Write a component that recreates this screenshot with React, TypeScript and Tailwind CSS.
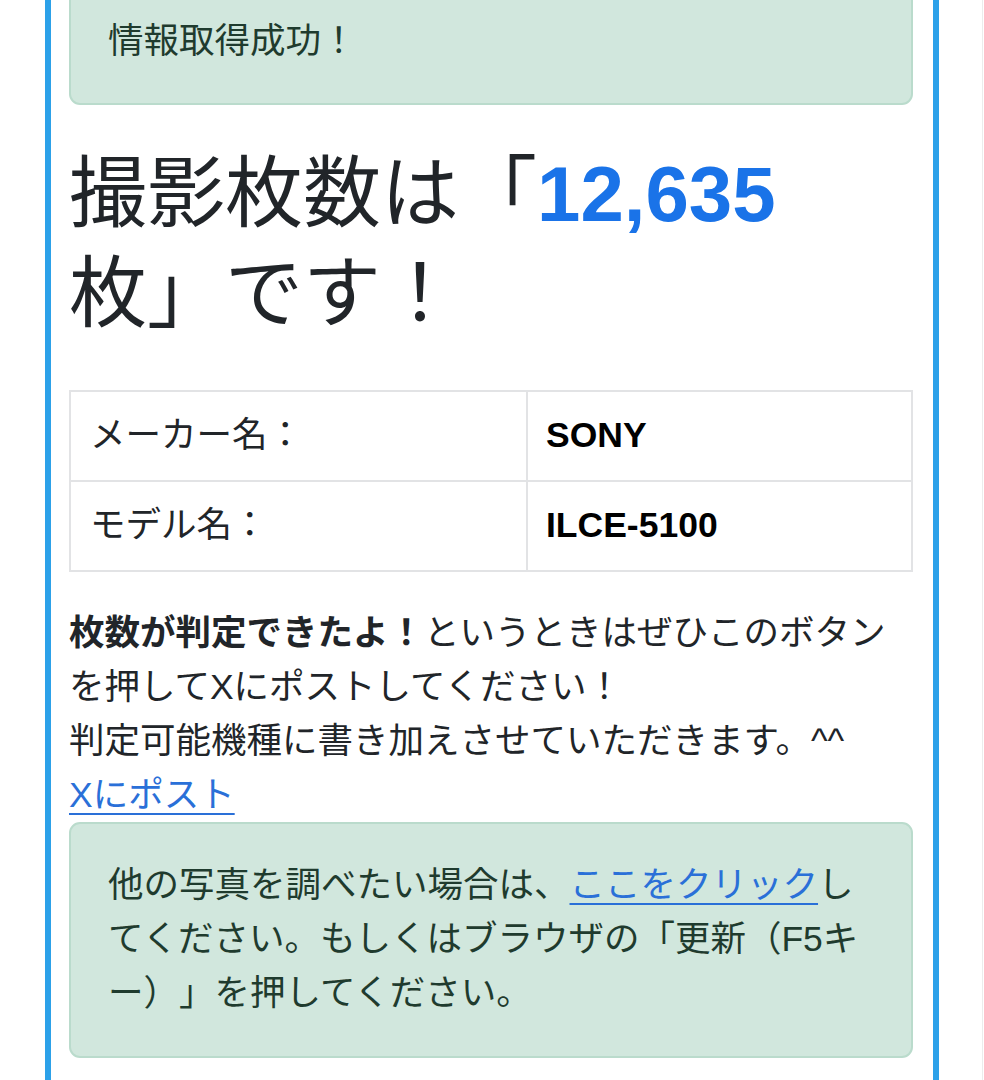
const FONT = "font-['Liberation_Sans','Noto_Sans_CJK_JP',sans-serif]";

const rows = [
    { label: 'メーカー名：', value: 'SONY' },
    { label: 'モデル名：', value: 'ILCE-5100' },
];

export default function App() {
    return (
        <div className={`${FONT} min-h-screen w-[983px] overflow-hidden border-r border-[#ececec] bg-white text-[#212529] [text-spacing-trim:space-all]`}>
            <div className="ml-[45px] min-h-[1140px] w-[894px] border-x-[6px] border-[#2ca1e9] pl-[18px] pr-[20px]">
                {/* success alert */}
                <div className="-mt-[23px] rounded-[11px] border-2 border-[#badbcc] bg-[#d1e7dd] px-[37px] py-[35px] text-[35.5px] leading-[54px] text-[#1f3b2e]">
                    情報取得成功！
                </div>

                <h1 className="mt-[39px] mb-[46px] text-[78px] font-normal leading-[100px]">
                    撮影枚数は「<span className="font-bold text-[#1a73e8]">12,635</span>
                    <br />
                    枚」です！
                </h1>

                <table className="mb-[34px] w-full border-collapse text-[35.5px]">
                    <tbody>
                        {rows.map((r) => (
                            <tr key={r.label} className="h-[90px]">
                                <td className="w-[457px] border-2 border-[#e2e3e5] px-[19px] align-middle">{r.label}</td>
                                <td className="border-2 border-[#e2e3e5] px-[18px] align-middle font-bold text-black">{r.value}</td>
                            </tr>
                        ))}
                    </tbody>
                </table>

                <p className="text-[35.5px] leading-[54px]">
                    <b className="font-bold">枚数が判定できたよ！</b>というときはぜひこのボタンを押してXにポストしてください！
                    <br />
                    判定可能機種に書き加えさせていただきます。^^
                    <br />
                    <a href="#" className="text-[#2a70d8] underline decoration-2 underline-offset-[6px]">
                        Xにポスト
                    </a>
                </p>

                <div className="rounded-[11px] border-2 border-[#badbcc] bg-[#d1e7dd] px-[37px] pt-[34px] pb-[36px] text-[35.5px] leading-[54px] text-[#1f3b2e]">
                    他の写真を調べたい場合は、
                    <a href="#" className="text-[#2a70d8] underline decoration-2 underline-offset-[6px]">
                        ここをクリック
                    </a>
                    してください。もしくはブラウザの「更新（F5キー）」を押してください。
                </div>
            </div>
        </div>
    );
}
